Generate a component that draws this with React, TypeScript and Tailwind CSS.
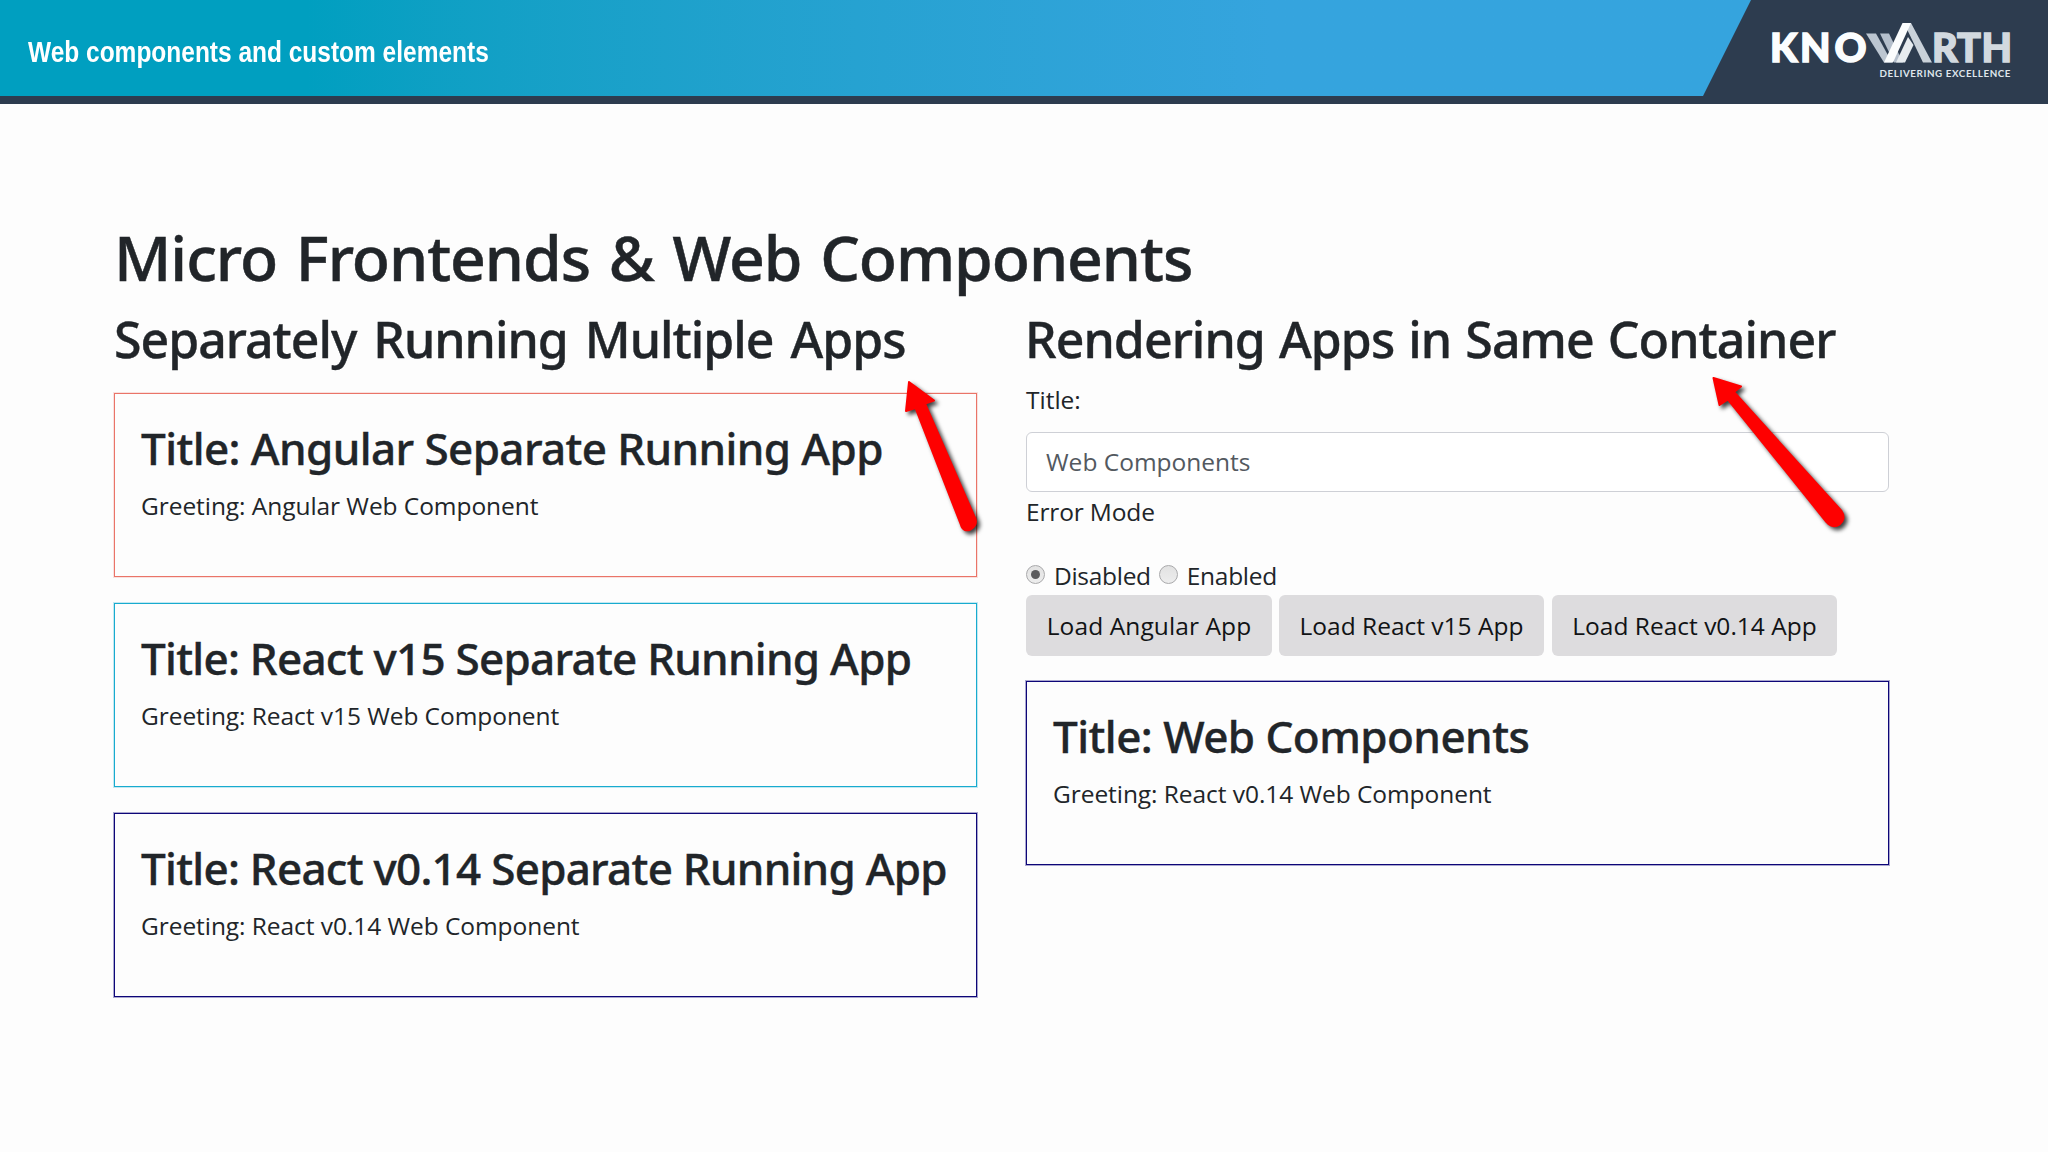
import React from 'react';

interface AppCardProps {
  title: string;
  greeting: string;
  border: string;
  tracking: string;
}

const separateApps: AppCardProps[] = [
  {
    title: 'Title: Angular Separate Running App',
    greeting: 'Greeting: Angular Web Component',
    border: 'border-[#ea7468] ring-[#ea7468]/20',
    tracking: 'tracking-[-0.6px]',
  },
  {
    title: 'Title: React v15 Separate Running App',
    greeting: 'Greeting: React v15 Web Component',
    border: 'border-[#18abcf] ring-[#18abcf]/25',
    tracking: 'tracking-[-0.74px]',
  },
  {
    title: 'Title: React v0.14 Separate Running App',
    greeting: 'Greeting: React v0.14 Web Component',
    border: 'border-[#0d0678] ring-[#0d0678]/35',
    tracking: 'tracking-[-0.74px]',
  },
];

const AppCard: React.FC<AppCardProps> = ({ title, greeting, border, tracking }) => (
  <div className={`h-[184px] pl-[26px] border ring-1 ${border}`}>
    <h3 className={`mt-7 text-[44px] leading-[52px] font-medium [-webkit-text-stroke:0.4px] font-['Noto_Sans',sans-serif] whitespace-nowrap ${tracking}`}>
      {title}
    </h3>
    <p className="mt-[13px] tracking-[-0.06px]">{greeting}</p>
  </div>
);

const Logo: React.FC = () => (
  <svg className="w-[250px] h-[72px]" viewBox="1765 15 250 72">
    <g fontFamily="Lato, sans-serif" fontWeight="900" fontSize="39.5" strokeWidth="1.5">
      <text x="1770 1800 1834.5" y="62.3" fill="#fbfdfe" stroke="#fbfdfe">KNO</text>
      <text x="1932 1957 1981.5" y="62.3" fill="#d2d9df" stroke="#d2d9df">RTH</text>
    </g>
    <path d="M1866 33.5H1876L1892 62.5H1884Z" fill="#bcc6d1" />
    <path d="M1880 33.5H1889L1903 62.5H1894Z" fill="#b4bfcc" />
    <path d="M1904 23H1911L1932 62.5H1923Z" fill="#c9d1d9" />
    <path d="M1896 62.5L1908 37L1913.5 45L1905 62.5Z" fill="#e6ebef" />
    <path d="M1884 62.5L1902.500 23H1911L1893 62.5Z" fill="#fbfdfe" />
    <text x="1879.5" y="77" textLength="131" fontFamily="Lato, sans-serif" fontWeight="700" fontSize="9.8" fill="#dfe6ec">
      DELIVERING EXCELLENCE
    </text>
  </svg>
);

const Header: React.FC = () => (
  <header className="relative h-[104px] bg-[#2d3c4f]">
    <div className="h-24 flex items-center pl-7 bg-linear-to-r from-[#009fc0] from-15% to-[#35a4de] to-62% [clip-path:polygon(0_0,1751px_0,1703px_100%,0_100%)]">
      <h1 className="mt-2 origin-left scale-x-[0.83] text-[29.5px] leading-8 font-bold text-white whitespace-nowrap font-['Liberation_Sans',sans-serif]">
        Web components and custom elements
      </h1>
    </div>
    <div className="absolute left-[1765px] top-[15px]">
      <Logo />
    </div>
  </header>
);

const Arrow: React.FC<{ className: string; d: string }> = ({ className, d }) => (
  <svg className={`absolute overflow-visible drop-shadow-[3px_3px_2px_rgba(0,0,0,0.75)] ${className}`}>
    <path d={d} fill="#fe0000" stroke="#fe0000" strokeWidth="2" strokeLinejoin="round" />
  </svg>
);

const Radio: React.FC<{ label: string; checked?: boolean }> = ({ label, checked }) => (
  <label className="flex items-center">
    <span className="-mt-1 size-[19px] rounded-full border-[1.5px] border-[#a9a9ab] bg-linear-to-b from-[#e2e2e2] to-[#ededed] flex items-center justify-center">
      {checked && <span className="size-[9px] rounded-full bg-[#5c5c5e]" />}
    </span>
    <span className="ml-[9px] tracking-[-0.3px]">{label}</span>
  </label>
);

const App: React.FC = () => {
  return (
    <div className="relative w-[2048px] h-[1152px] overflow-hidden bg-[#fdfdfd] text-[#212529] text-[24.5px] leading-[38px] font-['Open_Sans','Noto_Sans',sans-serif]">
      <Header />
      <main className="pt-[115px] pl-[114px]">
        <h1 className="text-[62.5px] leading-[75px] font-medium [-webkit-text-stroke:0.5px] tracking-[-1.05px] [word-spacing:3.5px] font-['Noto_Sans',sans-serif]">
          Micro Frontends &amp; Web Components
        </h1>
        <div className="mt-[15px] flex gap-[49px]">
          <section className="w-[863px]">
            <h2 className="text-[50px] leading-[60px] font-medium [-webkit-text-stroke:0.4px] tracking-[-1px] [word-spacing:5px] font-['Noto_Sans',sans-serif]">
              Separately Running Multiple Apps
            </h2>
            <div className="mt-6 flex flex-col gap-[26px]">
              {separateApps.map((app) => (
                <AppCard key={app.title} {...app} />
              ))}
            </div>
          </section>

          <section className="w-[863px]">
            <h2 className="-ml-px text-[50px] leading-[60px] font-medium [-webkit-text-stroke:0.4px] tracking-[-0.94px] [word-spacing:2px] font-['Noto_Sans',sans-serif]">
              Rendering Apps in Same Container
            </h2>
            <p className="mt-3">Title:</p>
            <div className="mt-[13px] h-[60px] flex items-center rounded-md border border-[#ced0d6] bg-white pl-[19px] text-[#53595f]">
              Web Components
            </div>
            <p className="mt-px tracking-[-0.15px]">Error Mode</p>
            <div className="mt-[26px] flex gap-2">
              <Radio label="Disabled" checked />
              <Radio label="Enabled" />
            </div>
            <div className="flex text-[#111315]">
              <button className="w-[246px] h-[61px] rounded-md bg-[#dddcde] tracking-[0.1px]">Load Angular App</button>
              <button className="ml-[7px] w-[265px] h-[61px] rounded-md bg-[#dddcde]">Load React v15 App</button>
              <button className="ml-2 w-[285px] h-[61px] rounded-md bg-[#dddcde]">Load React v0.14 App</button>
            </div>
            <div className="mt-[25px]">
              <AppCard
                title="Title: Web Components"
                greeting="Greeting: React v0.14 Web Component"
                border="border-[#0d0678] ring-[#0d0678]/35"
                tracking="tracking-[-0.55px]"
              />
            </div>
          </section>
        </div>
      </main>

      {/* callout arrows */}
      <Arrow
        className="left-[904px] top-[380px] w-[76px] h-[154px]"
        d="M5 2L30 20.500L21 23.500L71.500 139C74.500 148 60 156 57 145L11.500 28L2 31Z"
      />
      <Arrow
        className="left-[1712px] top-[376px] w-[134px] h-[152px]"
        d="M1.500 2L29 10.500L22 16L129.500 135C137 146 122 156 114.500 146L16 23.500L7.500 29Z"
      />
    </div>
  );
};

export default App;
